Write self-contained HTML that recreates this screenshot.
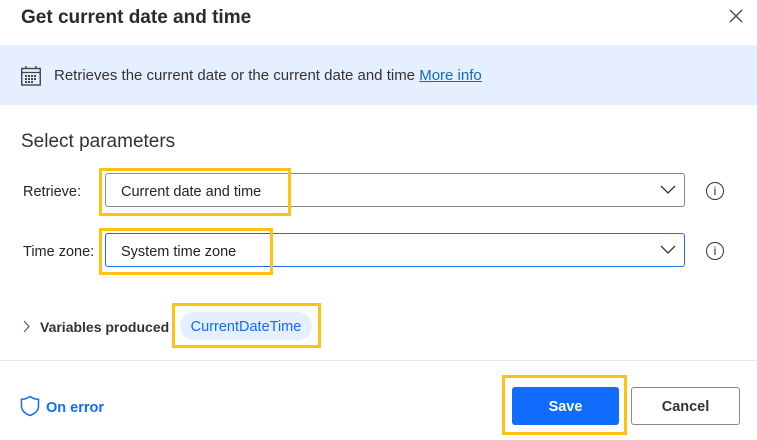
<!DOCTYPE html>
<html><head><style>
*{box-sizing:border-box;margin:0;padding:0}
body{width:757px;height:440px;background:#fff;font-family:"Liberation Sans",sans-serif;color:#242424;position:relative;overflow:hidden}
.a{position:absolute}
.yb{position:absolute;border:3px solid #ffc20e}
.dd{position:absolute;left:105px;width:580px;height:34px;border:1px solid #8a8a8a;border-radius:3px;font-size:14.5px;padding:10px 0 0 15px}
.info{position:absolute;left:706px;width:18px;height:18px;border:1.3px solid #333;border-radius:50%;font-size:12px;text-align:center;line-height:16px}
</style></head><body>
<div class="a" style="left:21px;top:7px;font-size:19px;font-weight:bold;color:#2b2b2b">Get current date and time</div>
<svg class="a" style="left:728px;top:8px" width="16" height="16"><path d="M2 2L14 14M14 2L2 14" stroke="#444" stroke-width="1.3"/></svg>
<div class="a" style="left:0;top:45px;width:757px;height:60px;background:#e6effd"></div>
<svg class="a" style="left:21px;top:66px" width="20" height="20"><rect x="0.75" y="2.5" width="18.5" height="16.5" fill="none" stroke="#444" stroke-width="1.4"/><line x1="1" y1="6.5" x2="19" y2="6.5" stroke="#444" stroke-width="1.3"/><line x1="5" y1="0" x2="5" y2="3" stroke="#444" stroke-width="1.4"/><line x1="15" y1="0" x2="15" y2="3" stroke="#444" stroke-width="1.4"/><g fill="#444"><rect x="4" y="9" width="2" height="2"/><rect x="7" y="9" width="2" height="2"/><rect x="10" y="9" width="2" height="2"/><rect x="13" y="9" width="2" height="2"/><rect x="4" y="12" width="2" height="2"/><rect x="7" y="12" width="2" height="2"/><rect x="10" y="12" width="2" height="2"/><rect x="13" y="12" width="2" height="2"/><rect x="4" y="15" width="2" height="2"/><rect x="7" y="15" width="2" height="2"/><rect x="10" y="15" width="2" height="2"/></g></svg>
<div class="a" style="left:54px;top:67px;font-size:15px;color:#333">Retrieves the current date or the current date and time <span style="color:#0f6cbd;text-decoration:underline">More info</span></div>
<div class="a" style="left:21px;top:131px;font-size:19px;color:#333">Select parameters</div>
<div class="a" style="left:23px;top:184px;font-size:14.5px">Retrieve:</div>
<div class="dd" style="top:173px">Current date and time</div>
<svg class="a" style="left:660px;top:185px" width="16" height="10"><path d="M1 1L8 8L15 1" fill="none" stroke="#333" stroke-width="1.3"/></svg>
<div class="info" style="top:182px">i</div>
<div class="yb" style="left:99px;top:168px;width:192px;height:48px"></div>
<div class="a" style="left:23px;top:244px;font-size:14.5px">Time zone:</div>
<div class="dd" style="top:233px;border-color:#1a6fe0">System time zone</div>
<svg class="a" style="left:660px;top:245px" width="16" height="10"><path d="M1 1L8 8L15 1" fill="none" stroke="#333" stroke-width="1.3"/></svg>
<div class="info" style="top:242px">i</div>
<div class="yb" style="left:99px;top:228px;width:174px;height:47px"></div>
<svg class="a" style="left:22px;top:320px" width="8" height="13"><path d="M2 1L7 6.5L2 12" fill="none" stroke="#555" stroke-width="1.1"/></svg>
<div class="a" style="left:40px;top:319px;font-size:14px;font-weight:bold;color:#333">Variables produced</div>
<div class="a" style="left:180px;top:312px;width:132px;height:28px;background:#e6effd;border-radius:14px;color:#0f6cfd;font-size:14.5px;text-align:center;line-height:30px">CurrentDateTime</div>
<div class="yb" style="left:172px;top:303px;width:149px;height:45px"></div>
<div class="a" style="left:0;top:360px;width:757px;height:1px;background:#e6e6e6"></div>
<svg class="a" style="left:20px;top:395px" width="20" height="22"><path d="M10 1.5C7 3.5 4.5 4.3 1.5 4.3V11C1.5 16 6 19 10 20.5C14 19 18.5 16 18.5 11V4.3C15.5 4.3 13 3.5 10 1.5Z" fill="none" stroke="#0f6cfd" stroke-width="1.5"/></svg>
<div class="a" style="left:46px;top:400px;font-size:14.5px;font-weight:bold;color:#0f6cfd">On error</div>
<div class="a" style="left:512px;top:387px;width:107px;height:38px;background:#0f6cfd;border-radius:3px;color:#fff;font-weight:bold;font-size:14.5px;text-align:center;line-height:40px">Save</div>
<div class="yb" style="left:502px;top:375px;width:125px;height:60px"></div>
<div class="a" style="left:631px;top:387px;width:109px;height:38px;border:1px solid #8a8a8a;border-radius:3px;font-weight:bold;font-size:14.5px;text-align:center;line-height:38px;color:#333">Cancel</div>
</body></html>
